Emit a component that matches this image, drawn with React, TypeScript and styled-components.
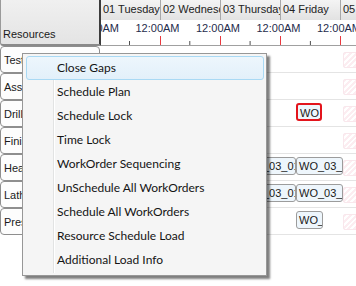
import React from "react";
import styled, {createGlobalStyle} from "styled-components";

const GlobalStyle = createGlobalStyle`
    html, body {
      margin: 0;
      padding: 0;
      background: #ffffff;
      overflow: hidden;
    }
`;

type Bar = { left: number, width: number, label: string, selected?: boolean };
type Resource = { name: string, bars: Bar[] };

const days = ["01 Tuesday", "02 Wednesday", "03 Thursday", "04 Friday", "05 Saturday"];

const resources: Resource[] = [
    {name: "Test", bars: []},
    {name: "Assembly", bars: []},
    {name: "Drill", bars: [{left: 195, width: 26, label: "WO_03_01", selected: true}]},
    {name: "Finishing", bars: []},
    {name: "Heat Treat", bars: [{left: 140, width: 55, label: "WO_03_01"}, {left: 195, width: 47, label: "WO_03_02"}]},
    {name: "Lathe", bars: [{left: 140, width: 55, label: "WO_03_01"}, {left: 195, width: 47, label: "WO_03_02"}]},
    {name: "Press", bars: [{left: 195, width: 27, label: "WO_03_03"}]},
];

const menuItems = [
    "Close Gaps",
    "Schedule Plan",
    "Schedule Lock",
    "Time Lock",
    "WorkOrder Sequencing",
    "UnSchedule All WorkOrders",
    "Schedule All WorkOrders",
    "Resource Schedule Load",
    "Additional Load Info",
];

const Frame = styled.div`
    position: relative;
    width: 356px;
    height: 286px;
    display: grid;
    grid-template-columns: 101px 1fr;
    overflow: hidden;
    font-family: "Liberation Sans", Arial, sans-serif;
    font-size: 11px;
    color: #1a1a1a;
`;

const LeftColumn = styled.div`
    display: flex;
    flex-direction: column;
`;

const ResourcesHeader = styled.div`
    box-sizing: border-box;
    width: 101px;
    height: 46px;
    display: flex;
    align-items: flex-end;
    padding: 0 0 4px 2px;
    background: linear-gradient(#f0f0f0, #e4e4e4);
    border: 1px solid #9a9a9a;
    border-top: none;
    border-right: 2px solid #3c3c3c;
    border-bottom: 2px solid #8a8a8a;
    border-bottom-left-radius: 3px;
`;

const ResourceButton = styled.div`
    box-sizing: border-box;
    width: 100px;
    height: 27px;
    display: flex;
    align-items: center;
    padding-left: 3px;
    background: #fdfdfd;
    border: 1px solid #8e8e8e;
    border-radius: 4px;
    white-space: nowrap;
    overflow: hidden;
`;

const Timeline = styled.div`
    display: flex;
    flex-direction: column;
    overflow: hidden;
`;

const DayRow = styled.div`
    display: flex;
    height: 20px;
    background: linear-gradient(#f4f4f4, #e2e2e2);
`;

const DayCell = styled.div`
    box-sizing: border-box;
    flex: 0 0 60px;
    padding: 3px 0 0 2px;
    border-right: 1px solid #a8a8a8;
    white-space: nowrap;
    overflow: hidden;
    text-overflow: clip;
    color: #222;
`;

const TimeRow = styled.div`
    display: flex;
    height: 16px;
    margin-left: -26px;
    background: #ffffff;
`;

const TimeCell = styled.div`
    flex: 0 0 60.5px;
    padding-top: 2px;
    white-space: nowrap;
    color: #1f2c4c;
`;

const TickRow = styled.svg`
    display: block;
    height: 9px;
    border-bottom: 1px solid #a0a0a0;
`;

const Row = styled.div`
    box-sizing: border-box;
    position: relative;
    height: 27px;
    border-bottom: 1px solid #e4e4e4;
`;

const WorkBar = styled.div<{ $selected?: boolean }>`
    box-sizing: border-box;
    position: absolute;
    top: 3px;
    height: 18px;
    padding: 2px 0 0 2px;
    background: #eef6fc;
    border: ${p => p.$selected ? "2px solid #e3141c" : "1px solid #9c9c9c"};
    border-radius: 3px;
    white-space: nowrap;
    overflow: hidden;
    color: #1a1a1a;
`;

const Unavailable = styled.div`
    box-sizing: border-box;
    position: absolute;
    left: 242px;
    top: 6px;
    width: 16px;
    height: 16px;
    border: 1px solid #f9e7ec;
    border-radius: 2px;
    background: repeating-linear-gradient(135deg, #fcedf1 0 2px, #ffffff 2px 4px);
`;

const Menu = styled.div`
    box-sizing: border-box;
    position: absolute;
    left: 22px;
    top: 53px;
    width: 245px;
    height: 223px;
    padding: 2px 2px 3px 3px;
    background: #f5f5f5;
    border: 1px solid #979797;
    box-shadow: 3px 3px 2px rgba(0, 0, 0, 0.5);
    font-family: Lato, "Open Sans", sans-serif;
    font-size: 12px;

    &::before {
      content: "";
      position: absolute;
      left: 30px;
      top: 2px;
      bottom: 2px;
      width: 1px;
      background: #e2e3e3;
      border-right: 1px solid #ffffff;
    }
`;

const MenuItem = styled.div<{ $active?: boolean }>`
    position: relative;
    box-sizing: border-box;
    height: 24px;
    display: flex;
    align-items: center;
    padding: 0 0 2px 30px;
    border: 1px solid ${p => p.$active ? "#a9d9f4" : "transparent"};
    border-radius: 3px;
    background: ${p => p.$active ? "linear-gradient(#edf6fc, #e2f0fa)" : "transparent"};
    color: #141414;
    white-space: nowrap;
`;

export default function App() {
    return (
        <Frame>
            <GlobalStyle/>
            <LeftColumn>
                <ResourcesHeader>Resources</ResourcesHeader>
                {resources.map(r => <ResourceButton key={r.name}>{r.name}</ResourceButton>)}
            </LeftColumn>
            <Timeline>
                <DayRow>
                    {days.map(d => <DayCell key={d}>{d}</DayCell>)}
                </DayRow>
                <TimeRow>
                    {days.map(d => <TimeCell key={d}>12:00AM</TimeCell>)}
                </TimeRow>
                <TickRow width="255" viewBox="0 0 255 9">
                    {[0, 1, 2, 3].map(i => (
                        <g key={i}>
                            <line x1={28.5 + i * 60.3} x2={28.5 + i * 60.3} y1="5" y2="9" stroke="#505050"/>
                            <line x1={59.5 + i * 60} x2={59.5 + i * 60} y1="0" y2="9" stroke="#ea3a40"/>
                        </g>
                    ))}
                </TickRow>
                {resources.map(r => (
                    <Row key={r.name}>
                        {r.bars.map((b, i) => (
                            <WorkBar key={i} $selected={b.selected} style={{left: b.left, width: b.width}}>
                                {b.label}
                            </WorkBar>
                        ))}
                        <Unavailable/>
                    </Row>
                ))}
            </Timeline>
            <Menu>
                {menuItems.map((m, i) => <MenuItem key={m} $active={i === 0}>{m}</MenuItem>)}
            </Menu>
        </Frame>
    );
}
